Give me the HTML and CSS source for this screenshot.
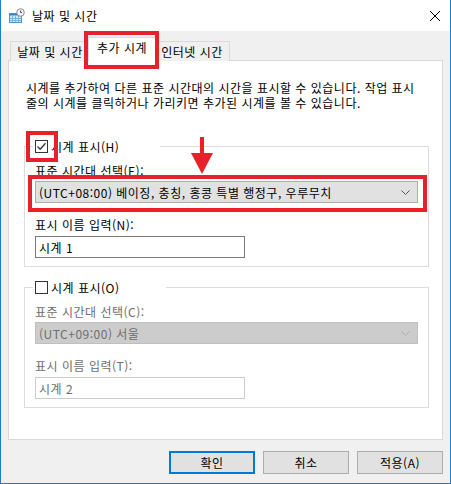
FILE: index.html
```html
<!DOCTYPE html>
<html lang="ko">
<head>
<meta charset="utf-8">
<title>날짜 및 시간</title>
<link rel="stylesheet" href="styles.css">
</head>
<body>
<div class="window">
  <div class="titlebar">
    <svg class="app-icon" width="16" height="16" viewBox="0 0 16 16">
      <rect x="0.5" y="5.5" width="12" height="9" fill="#cfe6f9" stroke="#4f93cf"/>
      <rect x="0.5" y="5.5" width="12" height="2" fill="#3c86cc"/>
      <path d="M3.5 8v6M6.5 8v6M9.5 8v6M1 10.5h11M1 12.5h11" stroke="#7fb3e0" stroke-width="1"/>
      <circle cx="11.5" cy="4.5" r="3.8" fill="#f2f2f2" stroke="#8a8a8a"/>
      <path d="M11.5 2.5v2h1.6" stroke="#555" stroke-width="1" fill="none"/>
    </svg>
    <span class="title">날짜 및 시간</span>
    <svg class="close" width="12" height="12" viewBox="0 0 12 12">
      <path d="M1 1L11 11M11 1L1 11" stroke="#000" stroke-width="1"/>
    </svg>
  </div>

  <div class="client">
    <div class="tabs">
      <div class="tab tab-first">날짜 및 시간</div>
      <div class="tab tab-active">추가 시계</div>
      <div class="tab tab-last">인터넷 시간</div>
    </div>

    <div class="panel">
      <p class="intro"><span class="line">시계를 추가하여 다른 표준 시간대의 시간을 표시할 수 있습니다. 작업 표시</span><span class="line">줄의 시계를 클릭하거나 가리키면 추가된 시계를 볼 수 있습니다.</span></p>

      <div class="group">
        <div class="group-head head-1">
          <span class="checkbox checked">
            <svg width="11" height="11" viewBox="0 0 11 11"><path d="M1.5 5.5L4.2 8.2L9.5 2.2" stroke="#333" stroke-width="1.3" fill="none"/></svg>
          </span>
          <span>시계 표시(H)</span>
        </div>
        <div class="label">표준 시간대 선택(E):</div>
        <div class="select">
          <span>(UTC+08:00) 베이징, 충칭, 홍콩 특별 행정구, 우루무치</span>
          <svg class="chev" width="9" height="5" viewBox="0 0 9 5"><path d="M0.5 0.5L4.5 4.5L8.5 0.5" stroke="#555" stroke-width="1" fill="none"/></svg>
        </div>
        <div class="label label-gap">표시 이름 입력(N):</div>
        <div class="input">시계 1</div>
      </div>

      <div class="group group-second disabled">
        <div class="group-head head-2">
          <span class="checkbox"></span>
          <span class="head-text">시계 표시(O)</span>
        </div>
        <div class="label">표준 시간대 선택(C):</div>
        <div class="select">
          <span>(UTC+09:00) 서울</span>
          <svg class="chev" width="9" height="5" viewBox="0 0 9 5"><path d="M0.5 0.5L4.5 4.5L8.5 0.5" stroke="#adadad" stroke-width="1" fill="none"/></svg>
        </div>
        <div class="label label-gap">표시 이름 입력(T):</div>
        <div class="input">시계 2</div>
      </div>
    </div>

    <div class="footer">
      <div class="btn btn-default">확인</div>
      <div class="btn">취소</div>
      <div class="btn">적용(A)</div>
    </div>
  </div>

  <div class="mark mark-tab"></div>
  <div class="mark mark-check"></div>
  <div class="mark mark-select"></div>
  <svg class="arrow" width="22" height="38" viewBox="0 0 22 38">
    <rect x="9" y="0" width="4" height="18" fill="#e8202a"/>
    <polygon points="0,16 22,16 11,37" fill="#e8202a"/>
  </svg>
</div>
</body>
</html>
```

FILE: styles.css
```css
* { box-sizing: border-box; }

html, body {
  margin: 0;
  padding: 0;
  width: 451px;
  height: 484px;
  overflow: hidden;
}

body {
  font-family: "Noto Sans CJK KR", "Noto Sans", sans-serif;
  font-size: 12px;
  font-weight: 400;
  line-height: 15px;
  letter-spacing: 0.5px;
  color: #000;
}

.window {
  position: relative;
  width: 451px;
  height: 484px;
  background: #f0f0f0;
  border: 1px solid #1a7fd4;
  border-top: none;
  display: flex;
  flex-direction: column;
}

.titlebar {
  height: 31px;
  background: #fff;
  display: flex;
  align-items: center;
  padding-left: 8px;
  flex: none;
}

.app-icon { flex: none; }

.title {
  margin-left: 7px;
  flex: 1;
}

.close {
  margin-right: 9px;
}

.client {
  padding: 0 7px;
  flex: 1;
  display: flex;
  flex-direction: column;
}

.tabs {
  height: 30px;
  display: flex;
  align-items: flex-end;
  padding-left: 2px;
  margin-bottom: -1px;
  position: relative;
  z-index: 1;
}

.tab {
  height: 20px;
  border: 1px solid #d9d9d9;
  border-bottom: none;
  background: #f0f0f0;
  display: flex;
  align-items: center;
  justify-content: center;
  padding-bottom: 1px;
  white-space: nowrap;
}

.tab-first { width: 80px; }

.tab-active {
  width: 68px;
  height: 24px;
  margin: 0 -2px;
  background: #fff;
  position: relative;
  z-index: 2;
  padding-bottom: 4px;
}

.tab-last { width: 76px; }

.panel {
  height: 380px;
  background: #fff;
  border: 1px solid #d9d9d9;
  padding: 19px 13px 0 15px;
}

.intro {
  margin: 0 0 0 2px;
  white-space: nowrap;
}

.line {
  display: block;
  height: 15px;
}

.group {
  margin-top: 36px;
  border: 1px solid #dcdcdc;
  padding: 0 10px 8px 10px;
}

.group-second { margin-top: 20px; }

.group-head {
  height: 15px;
  margin-top: -8px;
  margin-left: -2px;
  padding-left: 2px;
  background: #fff;
  display: flex;
  align-items: center;
}

.head-1 { width: 127px; }
.head-2 { width: 133px; }

.checkbox {
  width: 13px;
  height: 13px;
  border: 1px solid #333;
  background: #fff;
  margin-right: 3px;
  display: flex;
  align-items: center;
  justify-content: center;
  flex: none;
}

.label {
  margin-top: 9px;
  height: 15px;
}

.label-gap { margin-top: 14px; }

.select {
  margin-top: 3px;
  height: 22px;
  border: 1px solid #adadad;
  background: #e1e1e1;
  display: flex;
  align-items: center;
  justify-content: space-between;
  padding: 0 7px 0 3px;
}

.input {
  margin-top: 4px;
  width: 210px;
  height: 22px;
  border: 1px solid #7a7a7a;
  background: #fff;
  display: flex;
  align-items: center;
  padding-left: 3px;
}

.disabled .label,
.disabled .select,
.disabled .input { color: #6d6d6d; }

.disabled .select {
  background: #cccccc;
  border-color: #bfbfbf;
}

.disabled .input { border-color: #cccccc; }

.footer {
  display: flex;
  justify-content: flex-end;
  gap: 8px;
  padding: 11px 0 8px 0;
}

.btn {
  width: 86px;
  height: 23px;
  border: 1px solid #adadad;
  background: #e1e1e1;
  display: flex;
  align-items: center;
  justify-content: center;
}

.btn-default {
  border: 2px solid #0078d7;
}

/* red annotation overlays */
.mark {
  position: absolute;
  border: 4px solid #e8202a;
  z-index: 5;
}

.mark-tab { left: 83px; top: 31px; width: 75px; height: 38px; }
.mark-check { left: 25px; top: 131px; width: 32px; height: 31px; }
.mark-select { left: 27px; top: 175px; width: 399px; height: 37px; }

.arrow {
  position: absolute;
  left: 190px;
  top: 137px;
  z-index: 5;
}
```
